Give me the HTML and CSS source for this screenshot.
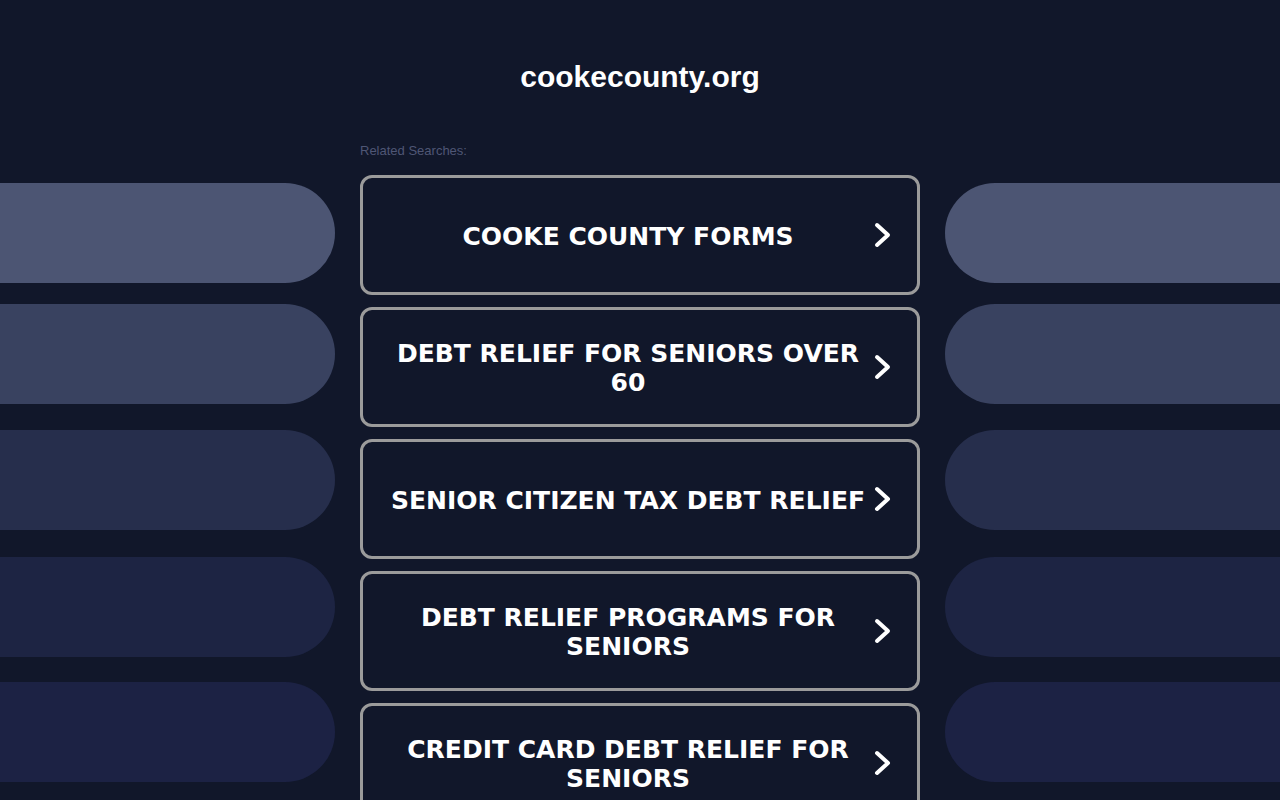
FILE: index.html
```html
<!DOCTYPE html>
<html lang="en">
<head>
<meta charset="utf-8">
<title>cookecounty.org</title>
<link rel="stylesheet" href="styles.css">
</head>
<body>
<header class="header">
  <h1 class="title">cookecounty.org</h1>
</header>
<div class="row">
  <div class="side side-left">
    <div class="pill p1"></div>
    <div class="pill p2"></div>
    <div class="pill p3"></div>
    <div class="pill p4"></div>
    <div class="pill p5"></div>
  </div>
  <main class="center">
    <div class="label">Related Searches:</div>
    <div class="list">
      <a class="btn" href="#"><span class="btn-text">COOKE COUNTY FORMS</span><svg class="chev" width="20" height="30" viewBox="0 0 20 30"><polyline points="4,5 15,15 4,25" fill="none" stroke="#fff" stroke-width="4" stroke-linecap="round" stroke-linejoin="round"/></svg></a>
      <a class="btn" href="#"><span class="btn-text">DEBT RELIEF FOR SENIORS OVER 60</span><svg class="chev" width="20" height="30" viewBox="0 0 20 30"><polyline points="4,5 15,15 4,25" fill="none" stroke="#fff" stroke-width="4" stroke-linecap="round" stroke-linejoin="round"/></svg></a>
      <a class="btn" href="#"><span class="btn-text">SENIOR CITIZEN TAX DEBT RELIEF</span><svg class="chev" width="20" height="30" viewBox="0 0 20 30"><polyline points="4,5 15,15 4,25" fill="none" stroke="#fff" stroke-width="4" stroke-linecap="round" stroke-linejoin="round"/></svg></a>
      <a class="btn" href="#"><span class="btn-text">DEBT RELIEF PROGRAMS FOR SENIORS</span><svg class="chev" width="20" height="30" viewBox="0 0 20 30"><polyline points="4,5 15,15 4,25" fill="none" stroke="#fff" stroke-width="4" stroke-linecap="round" stroke-linejoin="round"/></svg></a>
      <a class="btn" href="#"><span class="btn-text">CREDIT CARD DEBT RELIEF FOR SENIORS</span><svg class="chev" width="20" height="30" viewBox="0 0 20 30"><polyline points="4,5 15,15 4,25" fill="none" stroke="#fff" stroke-width="4" stroke-linecap="round" stroke-linejoin="round"/></svg></a>
    </div>
  </main>
  <div class="side side-right">
    <div class="pill p1"></div>
    <div class="pill p2"></div>
    <div class="pill p3"></div>
    <div class="pill p4"></div>
    <div class="pill p5"></div>
  </div>
</div>
</body>
</html>
```
FILE: styles.css
```css
html, body {
  margin: 0;
  padding: 0;
  height: 100%;
  overflow: hidden;
}
body {
  background: #11172a;
  font-family: "Liberation Sans", Arial, sans-serif;
  color: #fff;
}
.header {
  padding-top: 60px;
  height: 94px;
  box-sizing: border-box;
  text-align: center;
}
.title {
  margin: 0;
  font-family: "Liberation Sans", Arial, sans-serif;
  font-weight: 700;
  font-size: 30px;
  line-height: 34px;
  color: #fff;
}
.row {
  display: flex;
  justify-content: center;
}
.side {
  width: 335px;
  flex: 0 0 335px;
  display: flex;
  flex-direction: column;
  padding-top: 89px;
}
.pill {
  width: 335px;
  height: 100px;
  flex: 0 0 100px;
}
.side-left .pill {
  border-radius: 0 50px 50px 0;
}
.side-right .pill {
  border-radius: 50px 0 0 50px;
}
.p1 { background: #4c5573; }
.p2 { background: #394260; margin-top: 21px; }
.p3 { background: #262e4c; margin-top: 26px; }
.p4 { background: #1d2443; margin-top: 27px; }
.p5 { background: #1c2244; margin-top: 25px; }
.center {
  width: 560px;
  flex: 0 0 560px;
  margin: 0 25px;
  padding-top: 50px;
}
.label {
  font-family: "Liberation Sans", Arial, sans-serif;
  font-size: 13px;
  line-height: 14px;
  color: #4f5675;
  margin-bottom: 17px;
}
.list {
  display: flex;
  flex-direction: column;
  gap: 12px;
}
.btn {
  display: flex;
  align-items: center;
  box-sizing: border-box;
  height: 120px;
  border: 3px solid #9b9b9b;
  border-radius: 12px;
  padding: 0 24px 0 20px;
  text-decoration: none;
  color: #fff;
  background: #11172a;
}
.btn-text {
  flex: 1;
  text-align: center;
  font-family: "DejaVu Sans", Verdana, sans-serif;
  font-weight: 700;
  font-size: 25px;
  line-height: 29px;
  padding-top: 2px;
  color: #fff;
}
.chev {
  flex: 0 0 20px;
  display: block;
}
```
